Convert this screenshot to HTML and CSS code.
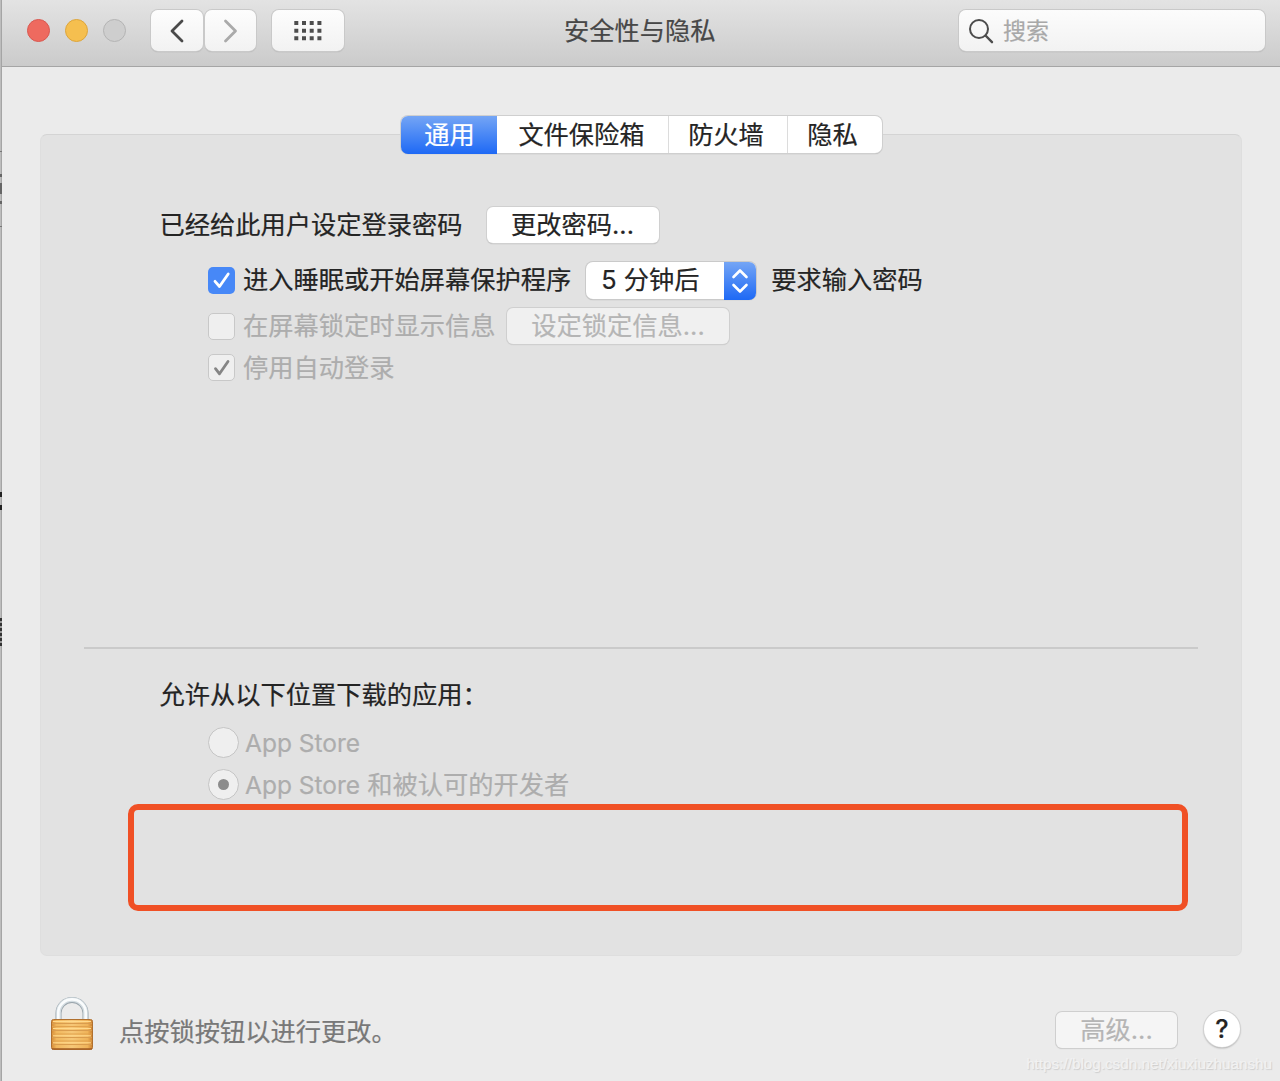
FILE: index.html
```html
<!DOCTYPE html>
<html lang="zh-CN">
<head>
<meta charset="utf-8">
<title>安全性与隐私</title>
<link rel="stylesheet" href="styles.css">
</head>
<body>
<div class="screen">
  <div class="backdrop">
    <i class="mark mark-line"></i><i class="mark mark-glyph"></i><i class="mark mark-line2"></i><i class="mark mark-curve"></i><i class="mark mark-dense"></i>
  </div>
  <div class="window">
    <header class="toolbar">
      <div class="lights"><span class="light red"></span><span class="light yellow"></span><span class="light off"></span></div>
      <div class="nav">
        <button class="tool"><svg width="52" height="42" viewBox="0 0 52 42"><path d="M31 11 21 21 31 31" fill="none" stroke="#4a4a4a" stroke-width="2.800" stroke-linecap="round" stroke-linejoin="round"/></svg></button>
        <button class="tool"><svg width="51" height="42" viewBox="0 0 51 42"><path d="M20.500 11 30.500 21 20.500 31" fill="none" stroke="#aaa" stroke-width="2.800" stroke-linecap="round" stroke-linejoin="round"/></svg></button>
      </div>
      <button class="tool grid"><svg width="72" height="42" viewBox="0 0 72 42" fill="#4d4d4d"><path d="M22.300 11h4v4h-4zM30 11h4v4h-4zM37.700 11h4v4h-4zM45.400 11h4v4h-4zM22.300 18.700h4v4h-4zM30 18.700h4v4h-4zM37.700 18.700h4v4h-4zM45.400 18.700h4v4h-4zM22.300 26.300h4v4h-4zM30 26.300h4v4h-4zM37.700 26.300h4v4h-4zM45.400 26.300h4v4h-4z"/></svg></button>
      <h1 class="title">安全性与隐私</h1>
      <div class="search"><svg width="26" height="26" viewBox="0 0 26 26" fill="none" stroke="#4c4c4c" stroke-width="2"><circle cx="10" cy="11" r="9"/><path d="M16.500 17.500 23 24.200" stroke-width="2.400" stroke-linecap="round"/></svg><span>搜索</span></div>
    </header>
    <main class="content">
      <nav class="tabs"><span class="tab active">通用</span><span class="tab files">文件保险箱</span><span class="tab wall">防火墙</span><span class="tab privacy">隐私</span></nav>
      <section class="panel">
        <div class="row password"><span>已经给此用户设定登录密码</span><button class="button change">更改密码...</button></div>
        <div class="row option sleep">
          <span class="check on"><svg width="27" height="27" viewBox="0 0 27 27"><path d="M7 14.300 11.500 19.500 20.200 7" fill="none" stroke="#fff" stroke-width="2.800" stroke-linecap="round" stroke-linejoin="round"/></svg></span>
          <span>进入睡眠或开始屏幕保护程序</span>
          <span class="select"><span class="value">5 分钟后</span><span class="stepper"><svg width="32" height="38" viewBox="0 0 32 38"><path d="M9.500 15 16 8.500 22.500 15M9.500 23 16 29.500 22.500 23" fill="none" stroke="#fff" stroke-width="2.600" stroke-linecap="round" stroke-linejoin="round"/></svg></span></span>
          <span>要求输入密码</span>
        </div>
        <div class="row option message disabled"><span class="check"></span><span>在屏幕锁定时显示信息</span><button class="button dim lockmsg">设定锁定信息...</button></div>
        <div class="row option login disabled"><span class="check"><svg width="25" height="25" viewBox="0 0 25 25"><path d="M6.500 13.700 10.500 18.800 19 6.500" fill="none" stroke="#858585" stroke-width="2.800" stroke-linecap="round" stroke-linejoin="round"/></svg></span><span>停用自动登录</span></div>
        <hr class="divider">
        <div class="row heading">允许从以下位置下载的应用：</div>
        <div class="row option source disabled"><span class="radio"></span><span class="label latin">App Store</span></div>
        <div class="row option source second disabled"><span class="radio selected"></span><span class="label"><span class="latin">App Store</span> 和被认可的开发者</span></div>
        <div class="highlight"></div>
      </section>
    </main>
    <footer class="footer">
      <svg class="lock" width="44" height="54" viewBox="0 0 44 54">
        <defs>
          <linearGradient id="brass" x1="0" x2="1"><stop offset="0" stop-color="#d58a35"/><stop offset=".12" stop-color="#f1b75d"/><stop offset=".5" stop-color="#f6c777"/><stop offset=".88" stop-color="#efb359"/><stop offset="1" stop-color="#cc802f"/></linearGradient>
        </defs>
        <g fill="none">
          <path d="M8.500 23V16a13.500 13 0 0 1 27 0V23" stroke="#98a3aa" stroke-width="6"/>
          <path d="M8.500 23V15.600a13.500 13 0 0 1 27 0V23" stroke="#d3dce1" stroke-width="4.800"/>
          <path d="M8.300 23V15.400a13.700 13 0 0 1 27.400 0V23" stroke="#fafcfd" stroke-width="2.600"/>
        </g>
        <rect x="1.500" y="22.500" width="41" height="30" rx="2" fill="url(#brass)" stroke="#b0702f"/>
        <path d="M2 26.500h40M2 33.500h40M2 40.500h40M2 47.500h40" stroke="#d99c4e" stroke-width="1.200"/>
        <path d="M2 29.500h40M2 37h40M2 44h40" stroke="#e1a24d" stroke-width="1"/>
        <path d="M3 24.500h38M3 31.500h38M3 38.800h38M3 45.800h38" stroke="#ffd98c" stroke-width="1"/>
        <path d="M2 51.900h40" stroke="#a15b23" stroke-width="1.200"/>
      </svg>
      <span class="hint">点按锁按钮以进行更改。</span>
      <button class="button dim advanced">高级...</button>
      <button class="help">?</button>
    </footer>
    <div class="watermark">https://blog.csdn.net/xiuxiuzhuanshu</div>
  </div>
</div>
</body>
</html>
```
FILE: styles.css
```css
* { box-sizing: border-box; }
body {
  margin: 0;
  overflow: hidden;
  font-family: Inter, "Noto Sans CJK SC", sans-serif;
  font-size: 25.25px;
  line-height: 30px;
  color: #242424;
  -webkit-text-stroke: .2px;
}
button { font: inherit; color: inherit; padding: 0; border: 0; }
svg { display: block; flex: none; }
.screen { display: flex; width: 1280px; height: 1081px; }
.backdrop { position: relative; width: 2px; background: linear-gradient(90deg, #bdbdbd 50%, #a5a5a5 50%); }
.mark { position: absolute; left: 0; width: 2px; background: #777; }
.mark-line { top: 151px; height: 1px; }
.mark-glyph { top: 174px; height: 30px; background: linear-gradient(#666 3px, transparent 3px 9px, #666 9px 20px, transparent 20px 27px, #666 27px); }
.mark-line2 { top: 226px; height: 1px; }
.mark-curve { top: 492px; height: 18px; background: linear-gradient(#222 5px, transparent 5px 13px, #222 13px); }
.mark-dense { top: 618px; height: 28px; background: repeating-linear-gradient(#333 0 3px, #999 3px 5px); }
.window { position: relative; flex: 1; display: flex; flex-direction: column; background: #ebebeb; }

.toolbar {
  display: flex;
  align-items: flex-start;
  height: 67px;
  padding: 10px 15px 0 25px;
  background: linear-gradient(#e3e3e3, #cbcbcb);
  border-bottom: 1px solid #a5a5a5;
}
.lights { display: flex; gap: 15px; padding-top: 9px; }
.light { width: 23px; height: 23px; border-radius: 50%; border: 1px solid; }
.red { background: #ee6a5f; border-color: #d95850; }
.yellow { background: #f5bf4f; border-color: #dda53b; }
.off { background: #cecece; border-color: #b4b4b4; }
.nav { display: flex; gap: 2px; margin-left: 25px; }
.tool { display: block; height: 41px; border-radius: 7px; background: linear-gradient(#fdfdfd, #f2f2f2); box-shadow: 0 0 0 1px #c9c9c9, 0 1px 1px #999; }
.grid { margin-left: 16px; }
.title { width: 156px; margin: 6px 0 0 220px; font-size: 25.25px; font-weight: 400; line-height: 30px; color: #474747; white-space: nowrap; }
.search {
  display: flex;
  align-items: center;
  width: 306px;
  height: 41px;
  margin-left: auto;
  padding-left: 10px;
  gap: 8px;
  border-radius: 7px;
  background: linear-gradient(#fcfcfc, #f2f2f2);
  box-shadow: 0 0 0 1px #c9c9c9, 0 1px 1px #999;
  font-size: 23px;
  color: #a8a8a8;
}

.content { height: 889px; padding: 49px 38px 0; }
.tabs {
  position: relative;
  display: flex;
  width: 481px;
  height: 37px;
  margin: 0 0 -19px 361px;
  border-radius: 7px;
  background: #fff;
  box-shadow: 0 0 0 1px #cfcfcf, 0 1px 1px #999;
}
.tab { display: flex; align-items: center; justify-content: center; border-left: 1px solid #dcdcdc; }
.active { width: 96px; height: 38px; padding-left: 1px; border: 0; border-radius: 7px 0 0 7px; color: #fff; background: linear-gradient(#74a5f5, #1e69f5); }
.files { width: 171px; padding-right: 3px; border-color: transparent; }
.wall { width: 119px; padding-right: 4px; }
.privacy { width: 95px; padding-right: 5px; }
.panel {
  height: 822px;
  padding-top: 71px;
  border: 1px solid #dedede;
  border-top-color: #d4d4d4;
  border-radius: 7px;
  background: #e2e2e2;
}
.row { display: flex; align-items: center; margin-left: 118.5px; white-space: nowrap; }
.option { margin-left: 167px; }
.disabled { color: #adadad; }
.button {
  display: flex;
  align-items: center;
  justify-content: center;
  height: 36px;
  border-radius: 6px;
  background: #fff;
  box-shadow: 0 0 0 1px #d0d0d0, 0 1px 1px #999;
}
.dim { color: #b5b5b5; background: #f0f0f0; box-shadow: 0 0 0 1px #cfcfcf, 0 1px 1px #c4c4c4; }
.password { height: 37px; }
.change { width: 172px; margin-left: 24px; }
.sleep { height: 38px; margin-top: 18px; }
.check { width: 27px; height: 27px; margin-right: 8px; border: 1px solid #c8c8c8; border-radius: 5px; background: #efefef; }
.check.on { border: 0; background: #4788f7; }
.select { display: flex; width: 170px; height: 37px; margin: 0 15px 0 15px; border-radius: 7px; background: #fff; box-shadow: 0 0 0 1px #cacaca, 0 1px 1px #999; }
.value { width: 138px; padding: 3px 0 0 15px; }
.stepper { width: 32px; height: 38px; border-radius: 0 7px 7px 0; background: linear-gradient(#74a5f5, #1e69f5); }
.message { height: 38px; margin-top: 8px; }
.lockmsg { width: 222px; margin-left: 11.5px; }
.login { height: 35px; margin-top: 5px; }
.divider { height: 2px; margin: 262px 43px 0; border: 0; background: #cacaca; }
.heading { height: 30px; margin-top: 31px; }
.source { height: 30px; margin-top: 17px; }
.second { margin-top: 12px; }
.radio { display: flex; align-items: center; justify-content: center; width: 31px; height: 31px; margin-right: 6px; border: 1px solid #c5c5c5; border-radius: 50%; background: #efefef; }
.selected::after { content: ""; width: 11px; height: 11px; border-radius: 50%; background: #8c8c8c; }
.label { padding-top: 2px; }
.latin { font-size: 24.5px; }
.highlight { width: 1060px; height: 107px; margin: 5px 0 0 87px; border: 6px solid #f05025; border-radius: 10px; }

.footer { display: flex; align-items: flex-start; padding: 41px 40px 0 48px; }
.hint { margin: 20px auto 0 25px; color: #787878; }
.advanced { width: 121px; margin: 15px 27px 0 0; background: #f5f5f5; }
.help { width: 36px; height: 36px; margin-top: 14px; border-radius: 50%; background: #fff; box-shadow: 0 0 0 1px #d2d2d2, 0 1px 2px #888; font-weight: 500; }
.watermark { position: absolute; right: 8px; bottom: 7px; font: 15.25px/20px "Liberation Sans", Arial, sans-serif; color: #f2f2f2; text-shadow: 1px 1px 1px #ccc; }
```
